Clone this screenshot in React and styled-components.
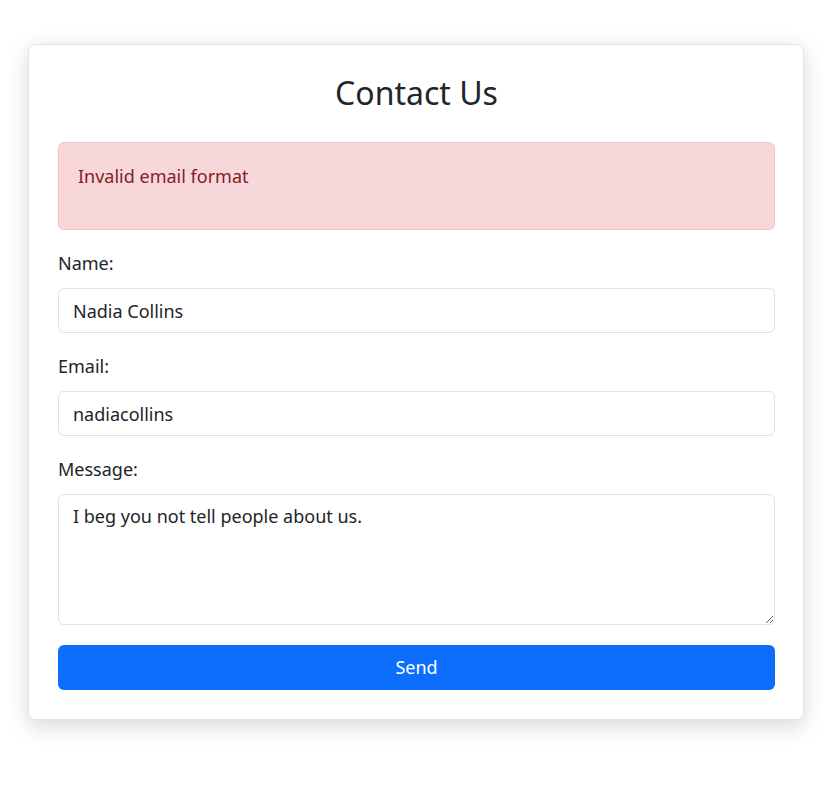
import React, { useState } from "react"
import styled, { createGlobalStyle } from "styled-components"

const GlobalStyle = createGlobalStyle`
  * { box-sizing: border-box; }
  body {
    margin: 0;
    background: #fff;
    color: #212529;
    font-family: "Noto Sans", "Open Sans", sans-serif;
    font-size: 18px;
    line-height: 1.5;
  }
`

const Page = styled.div`
  padding: 44px 24px 40px 28px;
`

const Card = styled.form`
  background: #fff;
  border: 1px solid #e3e3e3;
  border-radius: 7px;
  padding: 29px 28px 29px 29px;
  box-shadow: 0 6px 22px rgba(0, 0, 0, 0.16);
`

const Title = styled.h2`
  margin: 0 0 30px;
  font-size: 32px;
  font-weight: 400;
  line-height: 1.2;
  text-align: center;
`

const Alert = styled.div`
  background: #f8d7da;
  border: 1px solid #f5c2c7;
  border-radius: 6px;
  color: #842029;
  padding: 20px 19px 19px;
  margin-bottom: 20px;

  p {
    margin: 0 0 20px;
  }
`

const Group = styled.div`
  margin-bottom: 20px;
`

const Label = styled.label`
  display: block;
  margin-bottom: 11px;
`

const fieldStyles = `
  display: block;
  width: 100%;
  font: inherit;
  color: #212529;
  background: #fff;
  border: 1px solid #dee2e6;
  border-radius: 6px;
  padding: 8px 14px;
  outline: none;
`

const Input = styled.input`
  ${fieldStyles}
  height: 45px;
`

const TextArea = styled.textarea`
  ${fieldStyles}
  height: 131px;
  resize: vertical;
`

const Button = styled.button`
  display: block;
  width: 100%;
  height: 45px;
  border: none;
  border-radius: 6px;
  background: #0d6efd;
  color: #fff;
  font: inherit;
  cursor: pointer;
`

export default function App() {
  const [name, setName] = useState("Nadia Collins")
  const [email, setEmail] = useState("nadiacollins")
  const [message, setMessage] = useState("I beg you not tell people about us.")

  return (
    <Page>
      <GlobalStyle />
      <Card onSubmit={e => e.preventDefault()}>
        <Title>Contact Us</Title>
        <Alert>
          <p>Invalid email format</p>
        </Alert>
        <Group>
          <Label htmlFor="name">Name:</Label>
          <Input id="name" value={name} onChange={e => setName(e.target.value)} />
        </Group>
        <Group>
          <Label htmlFor="email">Email:</Label>
          <Input id="email" value={email} onChange={e => setEmail(e.target.value)} />
        </Group>
        <Group>
          <Label htmlFor="message">Message:</Label>
          <TextArea id="message" value={message} onChange={e => setMessage(e.target.value)} />
        </Group>
        <Button type="submit">Send</Button>
      </Card>
    </Page>
  )
}
